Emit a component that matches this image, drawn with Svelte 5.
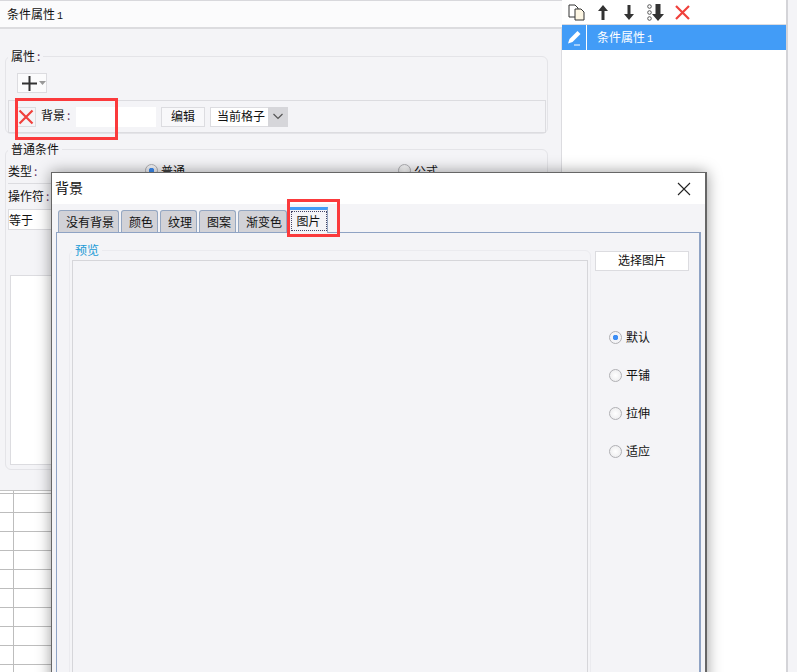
<script>
  const tabs = ['没有背景', '颜色', '纹理', '图案', '渐变色', '图片'];
  const fits = ['默认', '平铺', '拉伸', '适应'];
  let activeTab = $state('图片');
  let fit = $state('默认');
</script>

<div class="page">
  <div class="left">
    <div class="title">条件属性<span class="num">1</span></div>
    <div class="settings">
      <fieldset class="attr">
        <legend>属性<i>:</i></legend>
        <div class="add">
          <svg width="17" height="17" viewBox="0 0 17 17"><path d="M1 8.500h15M8.500 1v15" stroke="#333" stroke-width="2"/></svg>
          <svg width="7" height="4" viewBox="0 0 7 4"><path d="M0 0h7L3.500 4z" fill="#999"/></svg>
        </div>
        <div class="attr-row">
          <button class="del" aria-label="删除">
            <svg width="16" height="16" viewBox="0 0 16 16"><path d="M1.500 1.500l13 13M14.500 1.500l-13 13" stroke="#f0413c" stroke-width="2.200"/></svg>
          </button>
          <span class="bg-label">背景<i>:</i></span>
          <div class="swatch"></div>
          <button class="edit">编辑</button>
          <div class="select">
            <span>当前格子</span>
            <div class="caret">
              <svg width="12" height="7" viewBox="0 0 12 7"><path d="M1.500 1l4.500 4.500L10.500 1" fill="none" stroke="#555" stroke-width="1.200"/></svg>
            </div>
          </div>
        </div>
      </fieldset>
      <fieldset class="cond">
        <legend>普通条件</legend>
        <div class="cond-row first">
          <span class="cond-label">类型<i>:</i></span>
          <span class="radio on"></span><span class="radio-text">普通</span>
          <span class="radio second"></span><span class="radio-text">公式</span>
        </div>
        <div class="cond-row op">操作符<i>:</i></div>
        <div class="equal">等于</div>
        <div class="big-box"></div>
      </fieldset>
    </div>
    <div class="sheet"></div>
  </div>

  <div class="right">
    <div class="tools">
      <svg width="18" height="17" viewBox="0 0 18 17">
        <path d="M1 1h6l3 3v9H1z" fill="#fff" stroke="#333"/>
        <path d="M7 5h6l3 3v8H7z" fill="#fdf6e3" stroke="#333"/>
      </svg>
      <svg class="up" width="12" height="15" viewBox="0 0 12 15"><path d="M6 0l5 6H7.500v9h-3V6H1z" fill="#333"/></svg>
      <svg class="down" width="12" height="15" viewBox="0 0 12 15"><path d="M6 15L1 9h3.500V0h3v9H11z" fill="#333"/></svg>
      <svg class="bottom" width="17" height="17" viewBox="0 0 17 17">
        <circle cx="2.500" cy="2.500" r="1.800" fill="none" stroke="#555"/>
        <circle cx="2.500" cy="8.500" r="1.800" fill="none" stroke="#555"/>
        <circle cx="2.500" cy="14.500" r="1.800" fill="none" stroke="#555"/>
        <path d="M11 17l-6-7h3.500V0h5v10H17z" fill="#333"/>
      </svg>
      <svg class="remove" width="15" height="15" viewBox="0 0 15 15"><path d="M1 1l13 13M14 1L1 14" stroke="#f0413c" stroke-width="2.200"/></svg>
    </div>
    <div class="item">
      <div class="item-icon">
        <svg width="16" height="16" viewBox="0 0 16 16">
          <path d="M11.500 1l3 3-8 8-4.500 1.500L3.500 9z" fill="#fff"/>
          <path d="M8 15h6" stroke="#fff"/>
        </svg>
      </div>
      <span class="item-text">条件属性<span class="num">1</span></span>
    </div>
  </div>
  <div class="edge"></div>

  <div class="mark mark-attr"></div>

  <div class="dialog">
    <div class="dlg-head">
      <span>背景</span>
      <svg width="14" height="14" viewBox="0 0 14 14"><path d="M1 1l12 12M13 1L1 13" stroke="#222" stroke-width="1.100"/></svg>
    </div>
    <div class="tabs">
      {#each tabs as t}
        <button class="tab" class:active={activeTab === t} onclick={() => (activeTab = t)}><span>{t}</span></button>
      {/each}
    </div>
    <div class="pane">
      <fieldset class="preview">
        <legend>预览</legend>
        <div class="canvas"></div>
      </fieldset>
      <div class="side">
        <button class="choose">选择图片</button>
        <div class="fits">
          {#each fits as f}
            <button class="fit" onclick={() => (fit = f)}>
              <span class="radio" class:on={fit === f}></span>{f}
            </button>
          {/each}
        </div>
      </div>
    </div>
  </div>

  <div class="mark mark-tab"></div>
</div>

<style>
  :global(body) {
    margin: 0;
    background: #f4f4f7;
  }

  .page {
    position: relative;
    width: 797px;
    height: 672px;
    overflow: hidden;
    display: flex;
    font: 12px/16px "Noto Sans CJK SC", "Liberation Sans", sans-serif;
    color: #111;
    background: #f4f4f7;
  }

  i {
    font-style: normal;
    color: #636;
    margin-left: 2px;
  }

  button {
    font: inherit;
    color: inherit;
    padding: 0;
    cursor: pointer;
  }

  .num {
    font: 10px "Liberation Mono", monospace;
    margin-left: 2px;
  }

  .left {
    width: 562px;
    display: flex;
    flex-direction: column;
    flex: none;
  }

  .title {
    height: 26px;
    line-height: 25px;
    padding-left: 7px;
    background: #fbfbfc;
    border-top: 1px solid #d8d8dc;
    border-bottom: 2px solid #dcdcdf;
    flex: none;
  }

  .settings {
    height: 461px;
    box-sizing: border-box;
    padding: 19px 13px 0 5px;
    border-right: 1px solid #dcdce0;
    flex: none;
  }

  fieldset {
    margin: 0;
    min-width: 0;
    border: 1px solid #e4e4e8;
    border-radius: 6px;
  }

  legend {
    padding: 0 3px;
    font-size: 12px;
    line-height: 16px;
  }

  .attr {
    height: 86px;
    box-sizing: border-box;
    padding: 9px 1px 0 2px;
  }

  .add {
    width: 30px;
    height: 20px;
    margin-left: 9px;
    background: #fbfbfc;
    border: 1px solid #dcdce0;
    box-sizing: border-box;
    display: flex;
    align-items: center;
    padding-left: 3px;
    gap: 1px;
  }

  .attr-row {
    margin-top: 7px;
    height: 33px;
    box-sizing: border-box;
    border: 1px solid #dcdce0;
    display: flex;
    align-items: center;
    padding-left: 8px;
  }

  .del {
    width: 19px;
    height: 20px;
    border: 1px solid #dcdce0;
    background: #f4f4f7;
    display: flex;
    align-items: center;
    padding-left: 0;
  }

  .bg-label {
    margin-left: 5px;
    width: 35px;
    padding-bottom: 4px;
  }

  .swatch {
    width: 80px;
    height: 20px;
    background: #fff;
  }

  .edit {
    margin-left: 5px;
    width: 44px;
    height: 20px;
    border: 1px solid #dcdce0;
    background: #f8f8fa;
    padding-bottom: 2px;
  }

  .select {
    margin-left: 5px;
    width: 78px;
    height: 20px;
    box-sizing: border-box;
    border: 1px solid #dcdce0;
    background: #fff;
    display: flex;
    align-items: center;
    justify-content: space-between;
    padding-left: 6px;
  }

  .select span {
    padding-bottom: 2px;
  }

  .caret {
    width: 20px;
    height: 20px;
    background: #d6d6da;
    display: flex;
    align-items: center;
    justify-content: center;
    margin-right: -1px;
  }

  .cond {
    height: 329px;
    box-sizing: border-box;
    margin-top: 7px;
    padding: 0 0 0 2px;
  }

  .cond-row {
    height: 25px;
    display: flex;
    align-items: center;
  }

  .first {
    margin-top: 1px;
  }

  .cond-label {
    width: 137px;
  }

  .second {
    margin-left: 213px;
  }

  .radio-text {
    margin-left: 3px;
  }

  .op {
    border-top: 1px solid #dcdce0;
    height: 24px;
  }

  .equal {
    margin-top: 1px;
    height: 19px;
    line-height: 19px;
    width: 60px;
    background: #fff;
    border: 1px solid #dcdce0;
    box-sizing: content-box;
  }

  .big-box {
    margin: 45px 0 0 2px;
    height: 188px;
    width: 500px;
    background: #fff;
    border: 1px solid #dcdce0;
  }

  .sheet {
    flex: 1;
    border-top: 1px solid #c4c4c4;
    background-color: #fff;
    background-image:
      linear-gradient(#bdbdbd 0 0),
      repeating-linear-gradient(to bottom, transparent 0 2px, #bdbdbd 2px 3px, transparent 3px 19px);
    background-size: 1px 100%, 100% 100%;
    background-position: 13px 0, 0 0;
    background-repeat: no-repeat;
  }

  .right {
    width: 224px;
    background: #fff;
    flex: none;
  }

  .tools {
    height: 24px;
    display: flex;
    align-items: center;
    padding-left: 6px;
    border-bottom: 1px solid #dcdce0;
    box-sizing: content-box;
  }

  .up {
    margin-left: 11px;
  }

  .down {
    margin-left: 14px;
  }

  .bottom {
    margin-left: 12px;
  }

  .remove {
    margin-left: 11px;
  }

  .item {
    height: 25px;
    background: #429cf7;
    display: flex;
    align-items: center;
    color: #fff;
  }

  .item-icon {
    width: 24px;
    height: 25px;
    border-right: 1px solid #fff;
    display: flex;
    align-items: center;
    justify-content: center;
  }

  .item-text {
    margin-left: 10px;
    padding-bottom: 2px;
  }

  .edge {
    flex: 1;
    border-left: 2px solid #d4d4d8;
  }

  .mark {
    position: absolute;
    box-sizing: border-box;
    border: 3px solid #fb3a3c;
    z-index: 5;
  }

  .mark-attr {
    left: 15px;
    top: 98px;
    width: 103px;
    height: 42px;
  }

  .mark-tab {
    left: 287px;
    top: 199px;
    width: 53px;
    height: 38px;
  }

  .dialog {
    position: absolute;
    left: 51px;
    top: 172px;
    width: 656px;
    height: 560px;
    box-sizing: border-box;
    background: #f4f4f7;
    border: 1px solid #666;
    border-width: 1px 2px 1px 1px;
    box-shadow: 0 0 14px rgba(0, 0, 0, 0.4);
  }

  .dlg-head {
    height: 31px;
    background: #fff;
    display: flex;
    align-items: center;
    justify-content: space-between;
    padding: 0 14px 0 3px;
    font-size: 14px;
  }

  .dlg-head span {
    padding-bottom: 4px;
  }

  .tabs {
    display: flex;
    align-items: flex-end;
    gap: 2px;
    height: 28px;
    padding-left: 6px;
  }

  .tab {
    height: 22px;
    padding: 0 4px 0 7px;
    background: #d2d2d7;
    border: 1px solid #95a7c2;
    border-bottom: 0;
    border-radius: 3px 3px 0 0;
  }

  .tab.active {
    height: 26px;
    margin-bottom: -1px;
    position: relative;
    background: #f4f4f7;
    border-top: 3px solid #429cf7;
    border-radius: 0;
    padding: 0 0.5px 2px;
  }

  .tab.active span {
    display: block;
    border: 1px dotted #446;
    padding: 0 5px;
    line-height: 18px;
  }

  .pane {
    height: 480px;
    margin-left: 4px;
    width: 645px;
    box-sizing: border-box;
    border: 1px solid #8fa3c4;
    border-right-width: 2px;
    display: flex;
    padding: 9px 0 0 12px;
  }

  .preview {
    width: 522px;
    height: 500px;
    box-sizing: border-box;
    padding: 0 2px;
    flex: none;
    border-color: #ebebef;
  }

  .preview legend {
    color: #1a9ad6;
  }

  .canvas {
    height: 480px;
    margin-top: 2px;
    border: 1px solid #d6d6da;
  }

  .side {
    margin-left: 4px;
  }

  .choose {
    width: 94px;
    height: 20px;
    margin-top: 9px;
    background: #fff;
    border: 1px solid #dcdce0;
    padding-bottom: 2px;
  }

  .fits {
    margin: 58px 0 0 14px;
    display: flex;
    flex-direction: column;
    gap: 22px;
  }

  .fit {
    display: flex;
    align-items: center;
    gap: 4px;
    border: 0;
    background: none;
    height: 16px;
  }

  .radio {
    display: block;
    width: 13px;
    height: 13px;
    box-sizing: border-box;
    border: 1px solid #b0b0b4;
    border-radius: 50%;
    background: radial-gradient(#fff, #e8e8ea);
    flex: none;
  }

  .radio.on {
    background: radial-gradient(circle, #3d8ef5 0 2.500px, #f4f4f7 3px);
  }
</style>
